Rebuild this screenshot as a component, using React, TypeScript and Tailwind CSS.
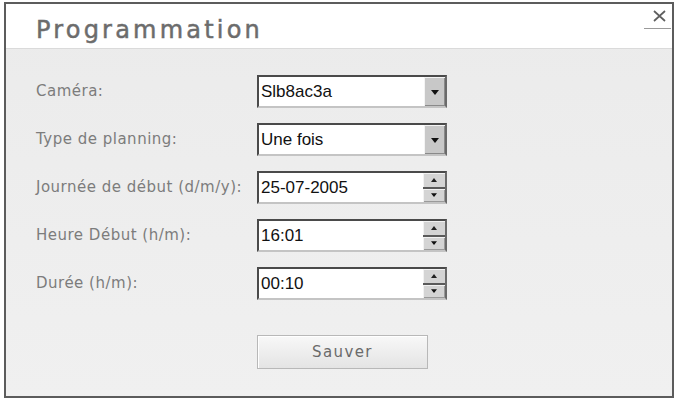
import React from "react";

type Field = { label: string; value: string; kind: "select" | "spin" };

const fields: Field[] = [
  { label: "Caméra:", value: "Slb8ac3a", kind: "select" },
  { label: "Type de planning:", value: "Une fois", kind: "select" },
  { label: "Journée de début (d/m/y):", value: "25-07-2005", kind: "spin" },
  { label: "Heure Début (h/m):", value: "16:01", kind: "spin" },
  { label: "Durée (h/m):", value: "00:10", kind: "spin" },
];

function DownArrow({ size = 8 }: { size?: number }) {
  return (
    <svg width={size} height={size / 2 + 1} viewBox="0 0 8 5">
      <path d="M0 0 H8 L4 5 Z" fill="#111" />
    </svg>
  );
}

function UpArrow() {
  return (
    <svg width="6" height="4" viewBox="0 0 6 4">
      <path d="M0 4 H6 L3 0 Z" fill="#222" />
    </svg>
  );
}

function Box({ field }: { field: Field }) {
  return (
    <div className="flex h-[33px] w-[190px] border-2 border-t-[#4a4a4a] border-l-[#4a4a4a] border-r-[#6a6a6a] border-b-[#c4c4c4] bg-white">
      <div className="flex flex-1 items-center pl-[2px] pt-[1px] text-[17px] text-[#111] [font-family:'Liberation_Sans',Arial,sans-serif]">
        {field.value}
      </div>
      {field.kind === "select" ? (
        <div className="flex w-[21px] items-center justify-center border-t border-l border-t-[#f4f4f4] border-l-[#f4f4f4] bg-[#c8c8c8] shadow-[inset_-1px_-1px_0_#8a8a8a]">
          <DownArrow />
        </div>
      ) : (
        <div className="flex w-[22px] flex-col">
          <div className="flex flex-1 items-center justify-center border-b-2 border-[#5a5a5a] bg-[#d4d4d4] shadow-[inset_1px_1px_0_#f2f2f2]">
            <UpArrow />
          </div>
          <div className="flex flex-1 items-center justify-center bg-[#d4d4d4] shadow-[inset_1px_1px_0_#f2f2f2,inset_-1px_-1px_0_#9a9a9a]">
            <DownArrow size={6} />
          </div>
        </div>
      )}
    </div>
  );
}

export default function App() {
  return (
    <div className="h-[401px] w-[676px] bg-white pl-[4px] pt-[2px] [font-family:'DejaVu_Sans',Verdana,sans-serif]">
      <div className="flex h-[396px] w-[670px] flex-col border-2 border-[#5c5c5c] bg-gradient-to-b from-[#ebebeb] to-[#f0f0f0]">
        {/* header */}
        <div className="relative flex h-[45px] items-center border-b border-[#dadada] bg-white pl-[30px]">
          <span className="pt-[7px] text-[24px] tracking-[3.2px] text-[#6c6c6c] [-webkit-text-stroke:0.5px_#6c6c6c]">
            Programmation
          </span>
          <div className="absolute right-[1px] top-[6px] flex w-[27px] flex-col items-end">
            <svg width="13" height="12" viewBox="0 0 13 12" className="mr-[5px]">
              <path d="M1 1 L12 11 M12 1 L1 11" stroke="#5e5e5e" strokeWidth="1.7" />
            </svg>
            <div className="mt-[6px] h-[1px] w-[27px] bg-[#9a9a9a]" />
          </div>
        </div>

        {/* form */}
        <div className="flex flex-col gap-[15px] pl-[30px] pt-[26px]">
          {fields.map((f) => (
            <div key={f.label} className="flex items-center">
              <div className="w-[221px] text-[15px] tracking-[0.5px] text-[#7c7c7c]">{f.label}</div>
              <Box field={f} />
            </div>
          ))}
        </div>

        <div className="mt-[35px] pl-[251px]">
          <button
            type="button"
            className="h-[34px] w-[171px] border border-[#b8b8b8] bg-gradient-to-b from-[#f8f8f8] to-[#e4e4e4] text-[15px] tracking-[1.4px] text-[#6a6a6a] shadow-[inset_1px_1px_0_#ffffff]"
          >
            Sauver
          </button>
        </div>
      </div>
    </div>
  );
}
